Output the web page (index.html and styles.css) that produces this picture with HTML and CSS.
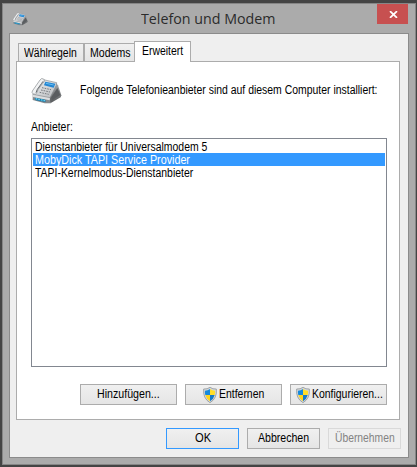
FILE: index.html
```html
<!DOCTYPE html>
<html lang="de">
<head>
<meta charset="utf-8">
<title>Telefon und Modem</title>
<link rel="stylesheet" href="styles.css">
</head>
<body>
<svg width="0" height="0" class="defs" aria-hidden="true">
  <defs>
    <linearGradient id="metal" x1="0" y1="0" x2="1" y2="1"><stop offset="0" stop-color="#f1f2f3"/><stop offset="1" stop-color="#b6b9bc"/></linearGradient>
    <linearGradient id="side" x1="0" y1="0" x2="0" y2="1"><stop offset="0" stop-color="#a8aaac"/><stop offset="1" stop-color="#55585a"/></linearGradient>
    <symbol id="phone" viewBox="0 0 96 84">
      <path d="M79 19 L84 25 L94 55 L92 61 L61 79 L57 60Z" fill="url(#side)"/>
      <path d="M82 33 L91 54 L66 70 L63 62Z" fill="#5a5d60"/>
      <path d="M8 51 L58 60 L62 79 L44 79 L8 69Z" fill="#85898d"/>
      <path d="M9 51 L60 61 L59 70 L8 60Z" fill="#dcdee0"/>
      <path d="M40 8 L80 17 L79 25 L60 62 L9 52 L26 25Z" fill="url(#metal)" stroke="#888c90" stroke-width="2"/>
      <path d="M46 14 L76 20 L71 32 L42 25Z" fill="#2386d3"/>
      <path d="M48 19 L71 24" stroke="#65bdf1" stroke-width="3"/>
      <path d="M36 32 L63 38 M33 39 L60 45 M29 46 L56 52" stroke="#777b80" stroke-width="3" stroke-dasharray="5 3"/>
      <path d="M41 6 Q34 2 30 9 L7 42 Q4 48 10 51 Q17 54 21 47 L24 38 L37 20 Q44 15 43 9Z" fill="#f2f3f4" stroke="#85898d" stroke-width="2"/>
      <path d="M39 13 L35 19 L22 37 L18 47" fill="none" stroke="#65696d" stroke-width="3"/>
      <path d="M14 62 L46 68 L47 75 L17 70Z" fill="#187bab"/>
      <path d="M17 65 L45 71" stroke="#64d0f1" stroke-width="4" stroke-dasharray="5 3"/>
    </symbol>
    <symbol id="shield" viewBox="0 0 42 48">
      <path d="M21 1 Q29 7 40 6 Q43 34 21 47 Q-1 34 2 6 Q13 7 21 1Z" fill="#d5d9dc" stroke="#81878b" stroke-width="2"/>
      <path d="M21 6 Q14 11 6 11 Q5 18 7 24 H21Z" fill="#1689dc"/>
      <path d="M21 6 Q28 11 36 11 Q37 18 35 24 H21Z" fill="#ffde28"/>
      <path d="M7 24 H21 V43 Q10 36 7 24Z" fill="#ffd51d"/>
      <path d="M35 24 H21 V43 Q32 36 35 24Z" fill="#1479c8"/>
    </symbol>
  </defs>
</svg>
<main class="window">
  <header class="titlebar">
    <svg class="app-icon"><use href="#phone"/></svg>
    <h1><span class="t-title">Telefon und Modem</span></h1>
    <button class="close" aria-label="Schließen"><svg viewBox="0 0 9 7"><path d="M1 .2 L8 6.8 M8 .2 L1 6.8" stroke="#fff" stroke-width="1.8"/></svg></button>
  </header>
  <section class="client">
    <nav class="tabs">
      <div class="tab tab-first"><span class="t-wahl">Wählregeln</span></div>
      <div class="tab tab-second"><span class="t-modems">Modems</span></div>
      <div class="tab active"><span class="t-erw">Erweitert</span></div>
    </nav>
    <div class="panel">
      <div class="intro">
        <svg class="phone"><use href="#phone"/></svg>
        <span class="t-intro">Folgende Telefonieanbieter sind auf diesem Computer installiert:</span>
      </div>
      <div class="label"><span class="t-label">Anbieter:</span></div>
      <div class="list">
        <div class="row"><span class="t-row1">Dienstanbieter für Universalmodem 5</span></div>
        <div class="row selected"><span class="t-row2">MobyDick TAPI Service Provider</span></div>
        <div class="row"><span class="t-row3">TAPI-Kernelmodus-Dienstanbieter</span></div>
      </div>
      <div class="actions">
        <button class="btn"><span class="t-add">Hinzufügen...</span></button>
        <button class="btn"><svg class="shield"><use href="#shield"/></svg><span class="t-remove">Entfernen</span></button>
        <button class="btn"><svg class="shield"><use href="#shield"/></svg><span class="t-config">Konfigurieren...</span></button>
      </div>
    </div>
    <footer class="footer">
      <button class="btn default"><span class="t-ok">OK</span></button>
      <button class="btn"><span class="t-cancel">Abbrechen</span></button>
      <button class="btn disabled" disabled><span class="t-apply">Übernehmen</span></button>
    </footer>
  </section>
</main>
</body>
</html>
```
FILE: styles.css
```css
* { box-sizing: border-box; }
body {
  margin: 0;
  padding: 3px 1px 2px 2px;
  width: 417px;
  height: 467px;
  overflow: hidden;
  background: #444;
  color: #000;
  font: 12px/13px "Liberation Sans", sans-serif;
}
.defs { position: absolute; }
button { font: inherit; padding: 0; margin: 0; color: inherit; }

/* Condensed interface lettering */
span {
  display: inline-block;
  white-space: nowrap;
  text-align: left;
  transform-origin: 0 50%;
  transform: scaleX(.87);
}
.t-title { transform: scaleX(.95); }
.t-modems { transform: scaleX(.88); }
.t-intro { width: 298px; }
.t-row2 { transform: scaleX(.896); }
.t-add { width: 63px; transform: scaleX(.887); }
.t-remove { width: 45px; }
.t-config { width: 70px; }
.t-ok { width: 16px; transform: scaleX(.93); }
.t-cancel { width: 51px; transform: scaleX(.88); }
.t-apply { width: 59px; transform: scaleX(.86); }

.window {
  width: 414px;
  height: 462px;
  padding: 0 6px 6px;
  background: #ababab;
  border: 1px solid #868686;
}
.titlebar { height: 29px; display: flex; align-items: flex-start; }
.app-icon { width: 16px; height: 14px; margin: 8px 0 0 3px; flex: none; }
.titlebar h1 {
  margin: 4px 0 0 113px;
  width: 134px;
  font: 15px/20px "Open Sans", sans-serif;
  color: #2b2b2b;
  white-space: nowrap;
}
.close {
  width: 31px;
  height: 20px;
  margin: 0 1px 0 auto;
  border: 0;
  background: #c75050;
  display: flex;
  align-items: center;
  justify-content: center;
}
.titlebar .close { margin-left: auto; margin-right: 1px; }
.close svg { width: 9px; height: 7px; margin-left: 1px; }
.client {
  width: 400px;
  height: 425px;
  border: 1px solid #8b8b8b;
  background: #efefef;
  padding: 7px 8px 0 6px;
}
.tabs { display: flex; align-items: flex-end; height: 20px; padding-left: 2px; position: relative; z-index: 1; }
.tab {
  height: 18px;
  border: 1px solid #acacac;
  border-bottom: 0;
  background: linear-gradient(#f0f0f0, #e5e5e5);
  padding: 3px 0 0 5px;
}
.tab-first { width: 66px; }
.tab-second { width: 50px; border-right: 0; }
.tab.active { width: 57px; height: 21px; margin-bottom: -1px; background: #fff; padding: 3px 0 0 7px; }
.panel { width: 384px; height: 359px; border: 1px solid #acacac; background: #fff; padding: 15px 12px 0 14px; }
.intro { display: flex; height: 28px; }
.phone { width: 32px; height: 28px; margin-left: -1px; flex: none; }
.intro span { margin: 7px 0 0 18px; }
.label { height: 17px; margin-top: 16px; }
.list { height: 229px; border: 1px solid #828790; padding: 1px; }
.row { height: 13px; padding-left: 2px; line-height: 14px; }
.selected { background: #3399ff; color: #fff; }
.actions { display: flex; justify-content: flex-end; gap: 8px; margin-top: 17px; }
.btn {
  width: 97px;
  height: 21px;
  border: 1px solid #acacac;
  background: linear-gradient(#f0f0f0, #e5e5e5);
  display: flex;
  align-items: center;
  justify-content: center;
  line-height: 19px;
}
.shield { width: 14px; height: 16px; margin-right: 2px; flex: none; }
.footer { display: flex; justify-content: flex-end; gap: 8px; margin: 8px -1px 0 0; }
.footer .btn { width: 73px; }
.btn.default { border-color: #3399ff; }
.btn.disabled { border-color: #d9d9d9; background: #efefef; color: #838383; }
```
